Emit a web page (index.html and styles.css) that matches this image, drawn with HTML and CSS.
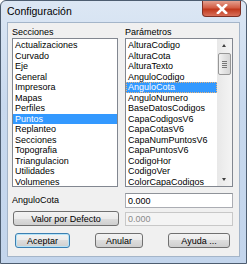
FILE: index.html
```html
<!DOCTYPE html>
<html lang="es">
<head>
  <meta charset="UTF-8" />
  <title>Configuración</title>
  <link rel="stylesheet" href="styles.css">
</head>
<body>
  <div class="window">
    <div class="titlebar">
      <span class="title">Configuración</span>
      <span class="close">
        <svg width="14" height="10" viewBox="0 0 14 10">
          <path d="M3 1 L11 9 M11 1 L3 9" stroke="#fff" stroke-width="2.6" stroke-linecap="square" />
        </svg>
      </span>
    </div>

    <div class="client">
      <div class="panes">
        <label class="cap">Secciones</label>
        <label class="cap">Parámetros</label>

        <div class="list">
          <div class="item">Actualizaciones</div>
          <div class="item">Curvado</div>
          <div class="item">Eje</div>
          <div class="item">General</div>
          <div class="item">Impresora</div>
          <div class="item">Mapas</div>
          <div class="item">Perfiles</div>
          <div class="item sel">Puntos</div>
          <div class="item">Replanteo</div>
          <div class="item">Secciones</div>
          <div class="item">Topografia</div>
          <div class="item">Triangulacion</div>
          <div class="item">Utilidades</div>
          <div class="item">Volumenes</div>
        </div>

        <div class="list list-scroll">
          <div class="items">
            <div class="item">AlturaCodigo</div>
            <div class="item">AlturaCota</div>
            <div class="item">AlturaTexto</div>
            <div class="item">AnguloCodigo</div>
            <div class="item sel focus">AnguloCota</div>
            <div class="item">AnguloNumero</div>
            <div class="item">BaseDatosCodigos</div>
            <div class="item">CapaCodigosV6</div>
            <div class="item">CapaCotasV6</div>
            <div class="item">CapaNumPuntosV6</div>
            <div class="item">CapaPuntosV6</div>
            <div class="item">CodigoHor</div>
            <div class="item">CodigoVer</div>
            <div class="item">ColorCapaCodigos</div>
          </div>
          <div class="scrollbar">
            <span class="arrow up"></span>
            <span class="thumb"><i></i><i></i><i></i><i></i></span>
            <span class="track"></span>
            <span class="arrow down"></span>
          </div>
        </div>

        <label class="param-name">AnguloCota</label>
        <input class="field" type="text" value="0.000" />

        <button class="btn btn-wide">Valor por Defecto</button>
        <input class="field" type="text" value="0.000" disabled />
      </div>

      <div class="actions">
        <button class="btn btn-default btn-ok">Aceptar</button>
        <button class="btn btn-cancel">Anular</button>
        <button class="btn btn-help">Ayuda ...</button>
      </div>
    </div>
  </div>
</body>
</html>
```

FILE: styles.css
```css
body {
  margin: 0;
  background: #fff;
  font-family: "Liberation Sans", Arial, sans-serif;
  font-size: 9px;
  color: #000;
}
.window {
  width: 247px;
  height: 264px;
  box-sizing: border-box;
  border: 1px solid #4d5d70;
  border-radius: 6px 6px 0 0;
  background: linear-gradient(#dce7f4, #c8d9ee 40%, #c3d5ec);
  display: flex;
  flex-direction: column;
}
.titlebar {
  height: 21px;
  display: flex;
  justify-content: space-between;
  align-items: flex-start;
  padding-left: 6px;
}
.title {
  font-size: 10.5px;
  margin-top: 4px;
}
.close {
  width: 39px;
  height: 16px;
  margin-right: 5px;
  box-sizing: border-box;
  border: 1px solid #7d3025;
  border-top: none;
  border-radius: 0 0 4px 4px;
  background: linear-gradient(#e4a08f, #d25d44 45%, #c0381c 55%, #d8705a);
  display: flex;
  align-items: center;
  justify-content: center;
}
.client {
  flex: 1;
  margin: 0 6px 6px 6px;
  border: 1px solid #a4b5c9;
  background: #f0f0f0;
  padding: 3px 0 0 4px;
}
.panes {
  display: grid;
  grid-template-columns: 106px 108px;
  column-gap: 7px;
}
.cap {
  line-height: 12px;
  height: 12px;
}
.list {
  height: 149px;
  box-sizing: border-box;
  border: 1px solid #828790;
  background: #fff;
  overflow: hidden;
}
.list-scroll {
  display: flex;
}
.items {
  flex: 1;
}
.item {
  height: 10.5px;
  line-height: 10.5px;
  padding-left: 2px;
  white-space: nowrap;
}
.item:first-child {
  margin-top: 1px;
}
.sel {
  background: #3399ff;
  color: #fff;
}
.focus {
  outline: 1px dotted #e8b47c;
  outline-offset: -1px;
}
.scrollbar {
  width: 15px;
  background: linear-gradient(90deg, #e8e8e8, #f4f4f4);
  display: flex;
  flex-direction: column;
  align-items: center;
}
.arrow {
  height: 14px;
  width: 15px;
  position: relative;
}
.arrow::after {
  content: "";
  position: absolute;
  left: 5px;
  border-left: 2.5px solid transparent;
  border-right: 2.5px solid transparent;
}
.up::after {
  top: 5px;
  border-bottom: 3px solid #404040;
}
.down::after {
  top: 6px;
  border-top: 3px solid #404040;
}
.thumb {
  width: 13px;
  height: 22px;
  box-sizing: border-box;
  border: 1px solid #979797;
  border-radius: 2px;
  background: linear-gradient(90deg, #f3f3f3, #e2e2e2 50%, #d6d6d6);
  display: flex;
  flex-direction: column;
  align-items: center;
  justify-content: center;
  gap: 1px;
}
.thumb i {
  width: 5px;
  height: 1px;
  background: #777;
}
.track {
  flex: 1;
}
.param-name {
  margin-top: 7px;
  line-height: 12px;
}
.field {
  margin-top: 6px;
  height: 15px;
  box-sizing: border-box;
  border: 1px solid #abadb3;
  border-top-color: #8f9399;
  padding: 0 2px;
  font: inherit;
  width: 108px;
}
.field:disabled {
  margin-top: 4px;
  height: 14px;
  background: #f4f4f4;
  border-color: #c8c8c8;
  color: #8a8a8a;
}
.btn {
  height: 15px;
  box-sizing: border-box;
  border: 1px solid #707070;
  border-radius: 3px;
  background: linear-gradient(#f3f3f3, #ebebeb 50%, #dddddd 50%, #cfcfcf);
  font: inherit;
  padding: 0;
  color: #000;
}
.btn-wide {
  margin-top: 3px;
  margin-left: 1px;
  width: 106px;
}
.btn-default {
  border-color: #3c7fb1;
  box-shadow: inset 0 0 0 1px #b6e4f8;
}
.actions {
  display: flex;
  margin-top: 7px;
  padding-left: 3px;
}
.btn-ok {
  width: 55px;
}
.btn-cancel {
  width: 48px;
  margin-left: 25px;
}
.btn-help {
  width: 62px;
  margin-left: 25px;
}
```
